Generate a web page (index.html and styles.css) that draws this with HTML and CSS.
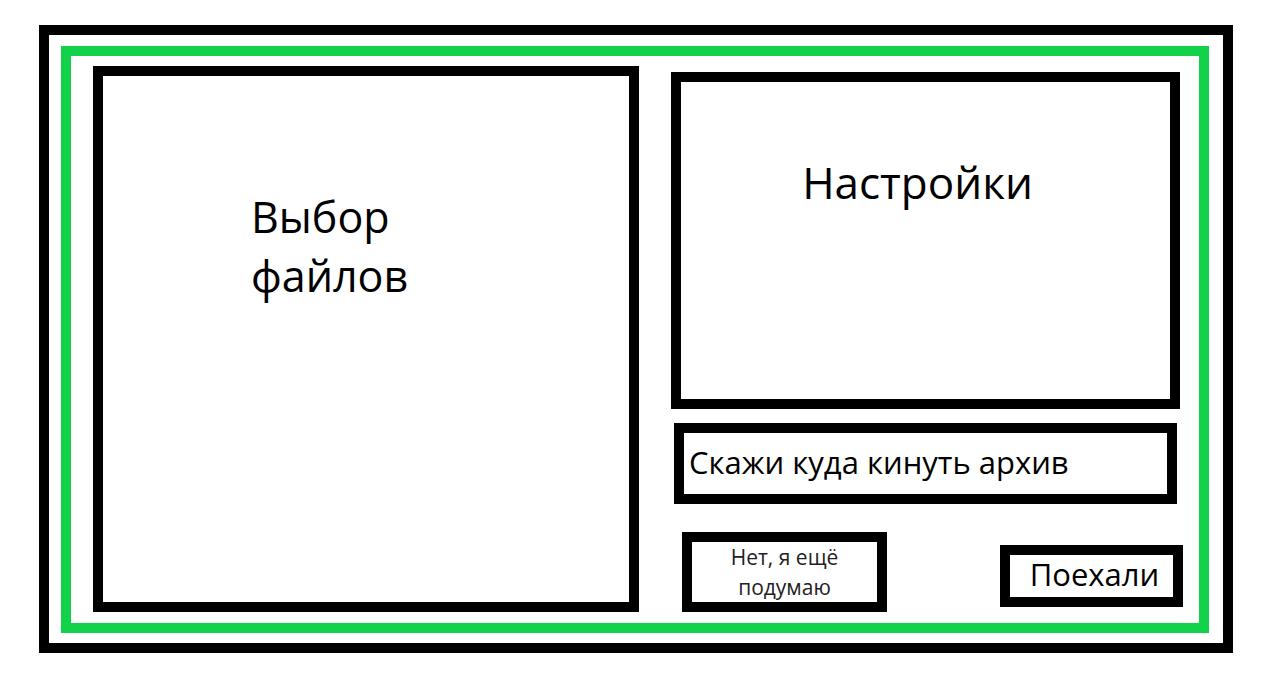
FILE: index.html
```html
<!DOCTYPE html>
<html lang="ru">
<head>
    <meta charset="UTF-8">
    <meta name="viewport" content="width=device-width, initial-scale=1.0">
    <title>Архиватор</title>
    <link rel="stylesheet" href="styles.css">
</head>
<body>
    <div class="frame">
        <div class="window">
            <div class="files">
                <div class="files-title">Выбор<br>файлов</div>
            </div>
            <div class="side">
                <div class="settings">Настройки</div>
                <div class="path">Скажи куда кинуть архив</div>
                <div class="actions">
                    <div class="btn btn-cancel">Нет, я ещё<br>подумаю</div>
                    <div class="btn btn-go">Поехали</div>
                </div>
            </div>
        </div>
    </div>
</body>
</html>
```

FILE: styles.css
```css
body {
    margin: 0;
    background: #fff;
    font-family: 'Open Sans', 'Noto Sans', sans-serif;
    color: #000;
}
.frame {
    box-sizing: border-box;
    width: 1194px;
    height: 628px;
    margin: 25px 0 0 39px;
    border: 10px solid #000;
    padding: 11px 14px 10px 12px;
}
.window {
    box-sizing: border-box;
    height: 100%;
    border: 10px solid #12d14a;
    display: flex;
    gap: 32px;
    padding: 10px 0 11px 22px;
}
.files {
    box-sizing: border-box;
    width: 546px;
    height: 546px;
    border: 10px solid #000;
    padding: 111px 0 0 148px;
}
.files-title {
    font-size: 43px;
    line-height: 59px;
}
.side {
    display: flex;
    flex-direction: column;
    padding-top: 6px;
}
.settings {
    box-sizing: border-box;
    width: 509px;
    height: 338px;
    border: 10px solid #000;
    text-align: center;
    padding: 70px 16px 0 0;
    font-size: 44px;
}
.path {
    box-sizing: border-box;
    width: 503px;
    height: 81px;
    margin: 14px 0 0 3px;
    border: 10px solid #000;
    padding: 8px 0 0 5px;
    font-size: 31px;
    white-space: nowrap;
}
.actions {
    display: flex;
    justify-content: space-between;
    align-items: flex-start;
    margin-top: 28px;
    width: 512px;
}
.btn {
    box-sizing: border-box;
    border: 10px solid #000;
    text-align: center;
}
.btn-cancel {
    width: 205px;
    height: 80px;
    margin-left: 11px;
    padding-top: 0;
    font-size: 21px;
    line-height: 30px;
    color: #222;
}
.btn-go {
    width: 183px;
    height: 62px;
    margin-top: 13px;
    padding: 1px 0 0 6px;
    font-size: 31px;
    line-height: 36px;
}
```
